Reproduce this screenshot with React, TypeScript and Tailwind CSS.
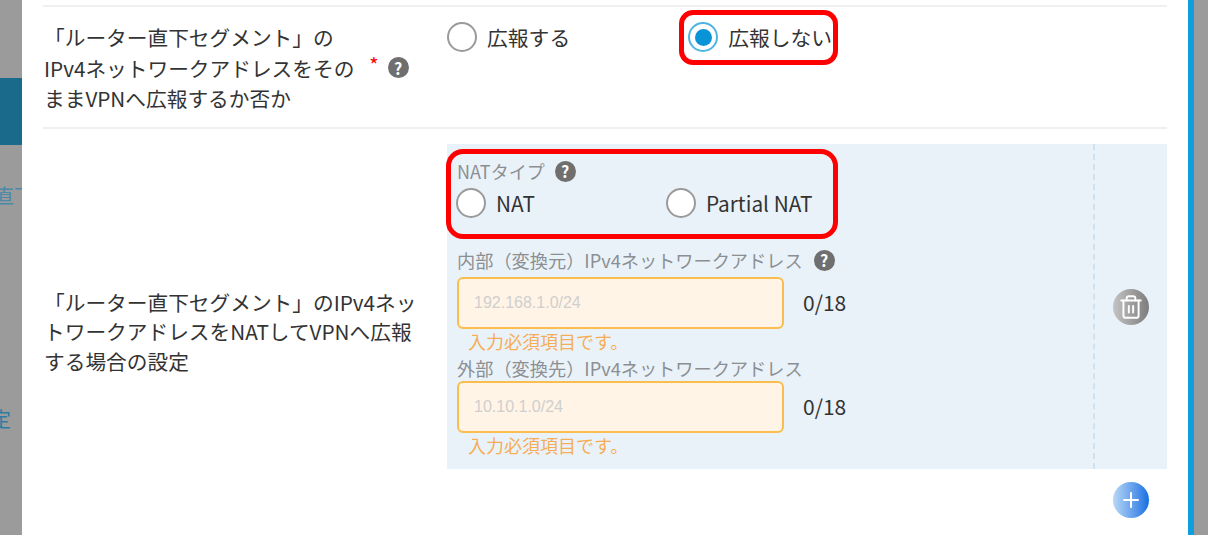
import { Trash2, Plus } from 'lucide-react';

const jp = "font-['Noto_Sans_CJK_JP','Noto_Sans',sans-serif]";

function Help({ className = '' }: { className?: string }) {
  return (
    <span className={`inline-flex h-[21px] w-[21px] shrink-0 items-center justify-center rounded-full bg-[#6f6f6f] text-[16px] font-bold leading-none text-white ${className}`}>
      ?
    </span>
  );
}

function Radio({ label, checked }: { label: string; checked?: boolean }) {
  return (
    <label className="flex items-center gap-2.5">
      <span className={`flex h-[30px] w-[30px] items-center justify-center rounded-full border-2 bg-white ${checked ? 'border-[#4db4e4]' : 'border-[#9a9a9a]'}`}>
        {checked && <span className="h-[17px] w-[17px] rounded-full bg-[#0a94d8]" />}
      </span>
      <span className="text-[20.8px] leading-none text-[#333]">{label}</span>
    </label>
  );
}

function AddressField({ label, placeholder, help, inputGap }: { label: string; placeholder: string; help?: boolean; inputGap: string }) {
  return (
    <div>
      <div className="flex h-[24px] items-center gap-[11px] text-[18.2px] leading-none text-[#8b8f93]">
        {label}
        {help && <Help />}
      </div>
      <div className={`flex items-center ${inputGap}`}>
        <div className="flex h-[52px] w-[327px] items-center rounded-[6px] border-2 border-[#fbbd4e] bg-[#fff4e5] pl-[15px] font-['Liberation_Sans',sans-serif] text-[16px] text-[#cfcfcf]">
          {placeholder}
        </div>
        <span className="ml-[19px] text-[21px] text-[#333]">0/18</span>
      </div>
      <div className="h-[24px] pl-[11px] text-[18px] leading-[24px] text-[#f6ad55]">入力必須項目です。</div>
    </div>
  );
}

export default function App() {
  return (
    <div className={`relative flex h-[535px] w-[1208px] overflow-hidden bg-white ${jp}`}>
      {/* dimmed page behind the dialog */}
      <div className="w-[22px] shrink-0 overflow-hidden bg-[#9b9b9b]">
        <div className="mt-[78px] h-[67px] bg-[#1a6a8c]" />
        <div className="mt-[38px] h-[26px] w-[22px] overflow-hidden whitespace-nowrap text-[20px] leading-[26px] text-[#4a8aa8]">
          <span className="-ml-[6px] inline-block">直下</span>
        </div>
        <div className="mt-[197px] h-[26px] w-[22px] overflow-hidden whitespace-nowrap text-[20px] leading-[26px] text-[#2f7ca3]">
          <span className="-ml-[9px] inline-block">定</span>
        </div>
      </div>

      <div className="flex-1 px-[21px] pt-[5px]">
        <div className="h-[2px] bg-[#f0f0f0]" />

        <div className="flex h-[120px]">
          <div className="flex w-[404px] items-start pl-[1px] pt-[15px] text-[20.7px] leading-[30.5px] text-[#333]">
            <div>
              <div className="whitespace-nowrap">「ルーター直下セグメント」の</div>
              <div className="flex items-center whitespace-nowrap">
                IPv4ネットワークアドレスをその
                <span className="ml-[15px] -mt-[6px] text-[20px] leading-none text-[#ff0000]">*</span>
                <Help className="ml-[9px]" />
              </div>
              <div className="whitespace-nowrap">ままVPNへ広報するか否か</div>
            </div>
          </div>
          <div className="flex items-start gap-[118px] pt-[15px]">
            <Radio label="広報する" />
            <Radio label="広報しない" checked />
          </div>
        </div>

        <div className="h-[2px] bg-[#f0f0f0]" />

        <div className="flex pt-[15px]">
          <div className="flex w-[404px] items-center pl-[1px] pt-[2px] text-[20.7px] leading-[29.5px] text-[#333]">
            <div className="w-[380px]">
              <div className="whitespace-nowrap">「ルーター直下セグメント」のIPv4ネッ</div>
              <div className="whitespace-nowrap">トワークアドレスをNATしてVPNへ広報</div>
              <div className="whitespace-nowrap">する場合の設定</div>
            </div>
          </div>

          <div className="flex-1">
            <div className="flex h-[325px] bg-[#eaf2f9]">
              <div className="w-[648px] border-r-2 border-dashed border-[#cde3f4] pl-[9px] pt-[15px]">
                <div className="flex h-[24px] items-center gap-[10px] pl-[1px] text-[18px] leading-none text-[#8b8f93]">
                  NATタイプ
                  <Help />
                </div>
                <div className="mt-[5px] flex gap-[131px]">
                  <Radio label="NAT" />
                  <Radio label="Partial NAT" />
                </div>
                <div className="mt-[30px] flex flex-col gap-[3px] pl-[1px]">
                  <AddressField label="内部（変換元）IPv4ネットワークアドレス" placeholder="192.168.1.0/24" help inputGap="mt-[5px]" />
                  <AddressField label="外部（変換先）IPv4ネットワークアドレス" placeholder="10.10.1.0/24" inputGap="mt-[1px]" />
                </div>
              </div>
              <div className="flex flex-1 justify-center pt-[145px]">
                <button className="flex h-[36px] w-[36px] items-center justify-center rounded-full bg-gradient-to-r from-[#c4c4c4] to-[#7d7d7d] text-white">
                  <Trash2 size={26} strokeWidth={1.8} />
                </button>
              </div>
            </div>
            <div className="flex justify-end pr-[18px] pt-[13px]">
              <button className="flex h-[36px] w-[36px] items-center justify-center rounded-full bg-gradient-to-r from-[#b9d8f5] to-[#0d6fe0] text-white">
                <Plus size={24} strokeWidth={2} />
              </button>
            </div>
          </div>
        </div>
      </div>

      <div className="w-[6px] shrink-0 bg-[#0f9fe0]" />
      <div className="w-[14px] shrink-0 bg-[#9b9b9b]" />

      {/* red annotation frames */}
      <div className="absolute left-[679px] top-[10px] h-[55px] w-[159px] rounded-[14px] border-[5px] border-[#ff0000]" />
      <div className="absolute left-[446px] top-[149px] h-[90px] w-[392px] rounded-[17px] border-[5px] border-[#ff0000]" />
    </div>
  );
}
